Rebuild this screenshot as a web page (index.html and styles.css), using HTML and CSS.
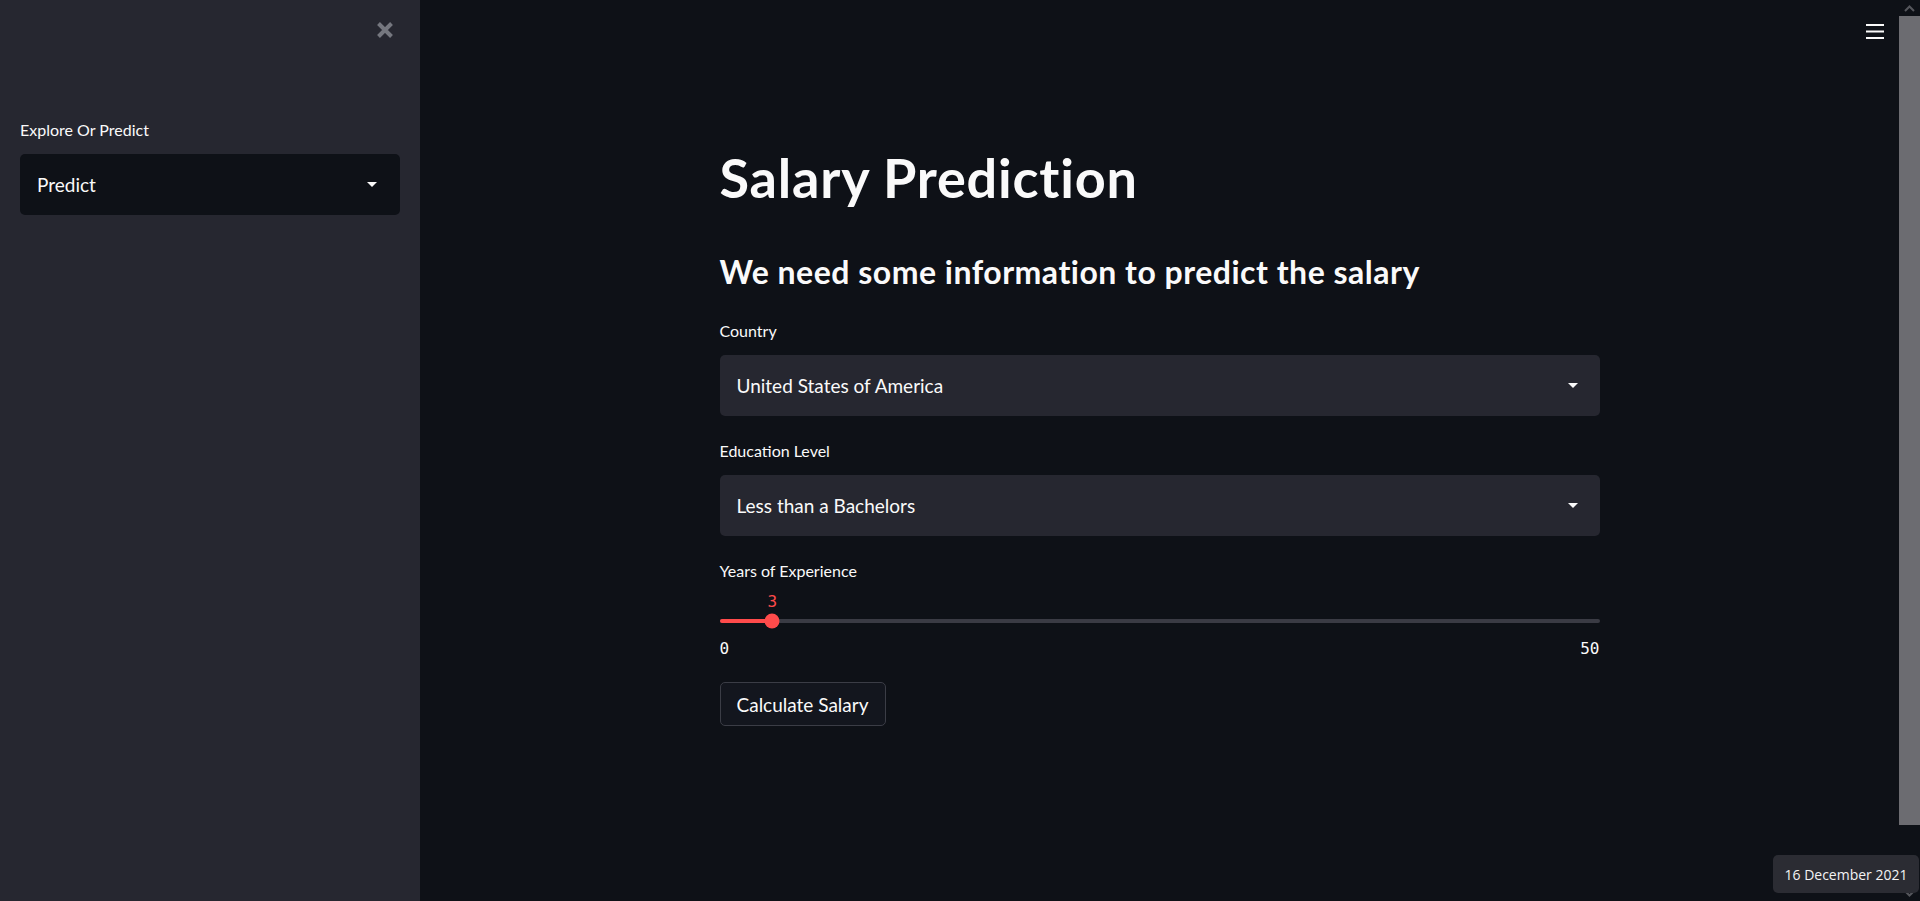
FILE: index.html
```html
<!DOCTYPE html>
<html lang="en">
<head>
<meta charset="utf-8">
<title>Salary Prediction</title>
<link rel="stylesheet" href="styles.css">
</head>
<body>
<div class="app">
  <aside class="sidebar">
    <div class="sidebar-head">
      <button class="close-btn" aria-label="Close sidebar">
        <svg width="18" height="18" viewBox="0 0 18 18"><path d="M2.5 2.5 L15.5 15.5 M15.5 2.5 L2.5 15.5" stroke="#75777f" stroke-width="4" stroke-linecap="butt"/></svg>
      </button>
    </div>
    <div class="field">
      <div class="field-label">Explore Or Predict</div>
      <div class="select select-dark">
        <span class="select-value">Predict</span>
        <svg class="caret" width="10" height="5" viewBox="0 0 10 5"><polygon points="0,0 10,0 5,5" fill="#fafafa"/></svg>
      </div>
    </div>
  </aside>

  <main class="main">
    <header class="toolbar">
      <button class="menu-btn" aria-label="Menu">
        <svg width="18" height="16" viewBox="0 0 18 16"><rect x="0" y="1" width="18" height="2" fill="#fafafa"/><rect x="0" y="7.5" width="18" height="2" fill="#fafafa"/><rect x="0" y="14" width="18" height="2" fill="#fafafa"/></svg>
      </button>
    </header>
    <div class="content">
      <h1 class="title">Salary Prediction</h1>
      <h2 class="subtitle">We need some information to predict the salary</h2>

      <div class="field field-main">
        <div class="field-label">Country</div>
        <div class="select">
          <span class="select-value">United States of America</span>
          <svg class="caret" width="10" height="5" viewBox="0 0 10 5"><polygon points="0,0 10,0 5,5" fill="#fafafa"/></svg>
        </div>
      </div>

      <div class="field field-main">
        <div class="field-label">Education Level</div>
        <div class="select">
          <span class="select-value">Less than a Bachelors</span>
          <svg class="caret" width="10" height="5" viewBox="0 0 10 5"><polygon points="0,0 10,0 5,5" fill="#fafafa"/></svg>
        </div>
      </div>

      <div class="field field-main">
        <div class="field-label">Years of Experience</div>
        <div class="slider">
          <div class="slider-rail">
            <div class="slider-fill" style="width: 6%"></div>
            <div class="slider-thumb" style="left: 6%">
              <span class="slider-value">3</span>
            </div>
          </div>
          <div class="slider-ticks">
            <span>0</span>
            <span>50</span>
          </div>
        </div>
      </div>

      <button class="btn">Calculate Salary</button>
    </div>
  </main>

  <div class="scrollbar">
    <div class="sb-arrow sb-up">
      <svg width="11" height="7" viewBox="0 0 11 7"><path d="M1 6 L5.5 1.5 L10 6" stroke="#55565c" stroke-width="2" fill="none"/></svg>
    </div>
    <div class="sb-thumb"></div>
    <div class="sb-space"></div>
    <div class="sb-arrow sb-down">
      <svg width="11" height="7" viewBox="0 0 11 7"><path d="M1 1 L5.5 5.5 L10 1" stroke="#55565c" stroke-width="2" fill="none"/></svg>
    </div>
  </div>
</div>
<div class="date-tip">16 December 2021</div>
</body>
</html>
```

FILE: styles.css
```css
* { box-sizing: border-box; }

html, body {
  margin: 0;
  padding: 0;
  height: 100%;
  background: #0e1117;
  color: #fafafa;
  font-family: Lato, "Liberation Sans", sans-serif;
  overflow: hidden;
}

.app {
  display: flex;
  height: 901px;
  width: 1920px;
}

/* Sidebar */
.sidebar {
  width: 420px;
  flex: 0 0 420px;
  background: #262730;
  padding: 0 20px;
}

.sidebar-head {
  height: 60px;
  display: flex;
  justify-content: flex-end;
  align-items: center;
  padding-right: 6px;
  margin-bottom: 60px;
}

.close-btn, .menu-btn {
  background: none;
  border: 0;
  padding: 0;
  display: flex;
  cursor: pointer;
}

.field-label {
  font-size: 16px;
  line-height: 19px;
  color: #fafafa;
}

.field .select {
  margin-top: 15px;
}

.select {
  height: 61px;
  border-radius: 5px;
  background: #262730;
  display: flex;
  align-items: center;
  justify-content: space-between;
  padding: 0 22px 0 17px;
}

.select-dark {
  background: #0e1117;
  padding-right: 23px;
}

.select-value {
  font-size: 19px;
  color: #fafafa;
}

.caret { display: block; }

/* Main */
.main {
  flex: 1;
  position: relative;
}

.toolbar {
  position: absolute;
  top: 23px;
  right: 15px;
}

.content {
  width: 880px;
  margin: 0 auto;
  padding-top: 146px;
}

.title {
  margin: 0;
  font-size: 54px;
  line-height: 64px;
  font-weight: 700;
  letter-spacing: 0.8px;
}

.subtitle {
  margin: 43px 0 0;
  font-size: 32px;
  line-height: 37px;
  font-weight: 700;
  letter-spacing: 0.5px;
}

.field-main { margin-top: 25px; }
.subtitle + .field-main { margin-top: 31px; }

/* Slider */
.slider { padding-top: 39px; }

.slider-rail {
  position: relative;
  height: 4px;
  border-radius: 2px;
  background: #3a3b44;
}

.slider-fill {
  position: absolute;
  left: 0;
  top: 0;
  bottom: 0;
  background: #ff4b4b;
  border-radius: 2px;
}

.slider-thumb {
  position: absolute;
  top: 50%;
  width: 15px;
  height: 15px;
  border-radius: 50%;
  background: #ff4b4b;
  transform: translate(-50%, -50%);
}

.slider-value {
  position: absolute;
  left: 50%;
  bottom: calc(100% + 4px);
  transform: translateX(-50%);
  font-family: "DejaVu Sans Mono", "Liberation Mono", monospace;
  font-size: 16px;
  line-height: 17px;
  color: #ff4b4b;
}

.slider-ticks {
  margin-top: 17px;
  display: flex;
  justify-content: space-between;
  font-family: "DejaVu Sans Mono", "Liberation Mono", monospace;
  font-size: 16px;
  line-height: 17px;
  color: #fafafa;
}

/* Button */
.btn {
  margin-top: 25px;
  height: 44px;
  padding: 0 16px;
  background: #13161e;
  border: 1px solid #3b3d46;
  border-radius: 5px;
  color: #fafafa;
  font-family: Lato, "Liberation Sans", sans-serif;
  font-size: 19px;
  cursor: pointer;
}

/* Scrollbar */
.scrollbar {
  width: 21px;
  flex: 0 0 21px;
  display: flex;
  flex-direction: column;
  background: #0e1117;
}

.sb-arrow {
  height: 16px;
  display: flex;
  align-items: center;
  justify-content: center;
}

.sb-thumb {
  height: 809px;
  background: #6c6c71;
}

.sb-space { flex: 1; }

/* Date tooltip */
.date-tip {
  position: fixed;
  right: 1px;
  bottom: 8px;
  width: 146px;
  height: 38px;
  background: #2b2c33;
  border-radius: 5px;
  display: flex;
  align-items: center;
  justify-content: center;
  font-family: "Open Sans", "Noto Sans", sans-serif;
  font-size: 14px;
  color: #f3f3f3;
}
```
